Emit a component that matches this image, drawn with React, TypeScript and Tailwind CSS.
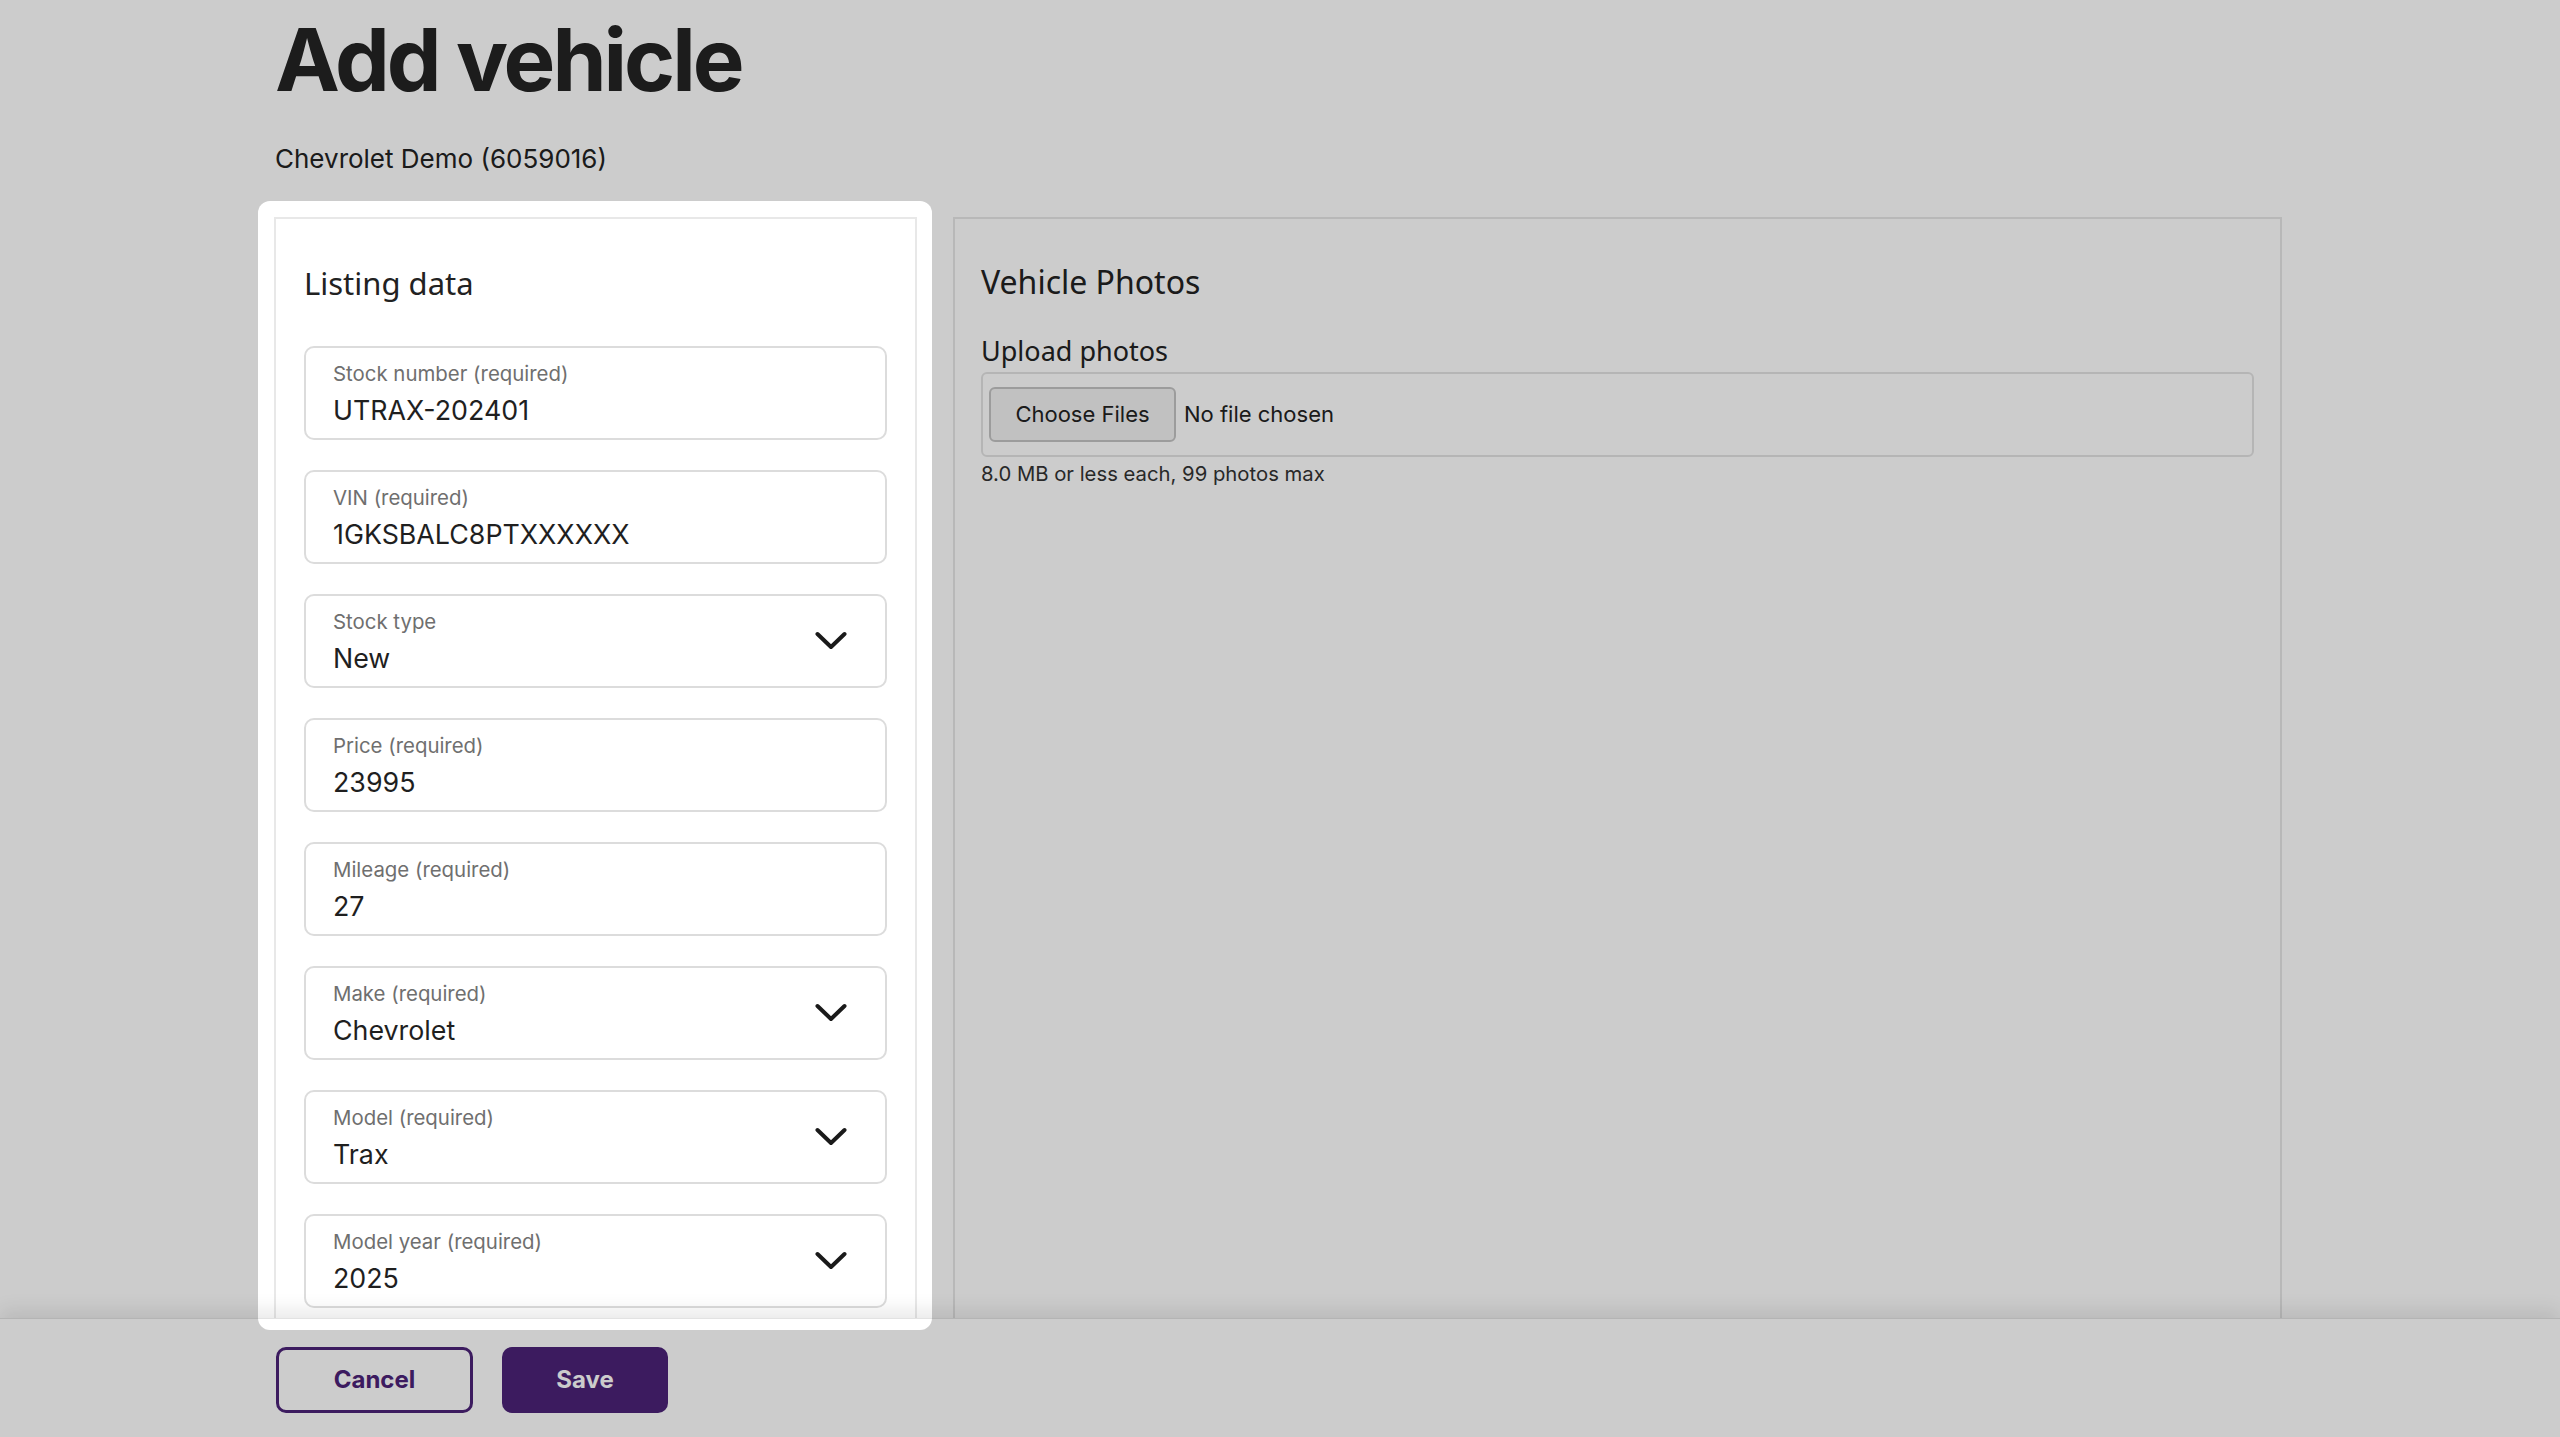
import React from "react";

function Chevron() {
  return (
    <svg width="32" height="20" viewBox="0 0 32 20" fill="none" className="shrink-0">
      <path d="M2.5 3 L16 16 L29.5 3" stroke="#1a1a1a" strokeWidth="4" strokeLinecap="round" strokeLinejoin="round" />
    </svg>
  );
}

function Field({ label, value, select }: { label: string; value: string; select?: boolean }) {
  return (
    <div className="h-[94px] rounded-[10px] border-2 border-[#dcdcdc] bg-white flex items-center pl-[27px] pr-[38px]">
      <div className="flex-1 flex flex-col self-start pt-[16px]">
        <div className="text-[20.4px] leading-none text-[#6f6f6f]">{label}</div>
        <div className="mt-[13px] text-[26.8px] leading-none text-[#1f1f1f]">{value}</div>
      </div>
      {select && <Chevron />}
    </div>
  );
}

export default function App() {
  const fields = [
    { label: "Stock number (required)", value: "UTRAX-202401" },
    { label: "VIN (required)", value: "1GKSBALC8PTXXXXXX" },
    { label: "Stock type", value: "New", select: true },
    { label: "Price (required)", value: "23995" },
    { label: "Mileage (required)", value: "27" },
    { label: "Make (required)", value: "Chevrolet", select: true },
    { label: "Model (required)", value: "Trax", select: true },
    { label: "Model year (required)", value: "2025", select: true },
  ];

  return (
    <div className="relative h-[1437px] w-full overflow-hidden bg-white font-['Inter',sans-serif] text-[#222]">
      <div className="ml-[274px] w-[2008px]">
        <h1 className="pt-[16px] text-[87px] font-bold leading-none tracking-[-0.035em] text-[#232323] pl-[1px]">
          Add vehicle
        </h1>
        <div className="mt-[43px] text-[26px] leading-none text-[#222] pl-[1px]">
          Chevrolet Demo (6059016)
        </div>

        <div className="mt-[45px] flex gap-[36px]">
          <div className="w-[643px] shrink-0 border-2 border-[#e8e8e8] bg-white px-[28px] pt-[49px] pb-[240px]">
            <h2 className="font-['Noto_Sans',sans-serif] text-[31px] leading-none text-[#222]">Listing data</h2>
            <div className="mt-[47px] flex flex-col gap-[30px]">
              {fields.map((f) => (
                <Field key={f.label} label={f.label} value={f.value} select={f.select} />
              ))}
            </div>
          </div>

          <div className="flex-1 border-2 border-[#e6e6e6] bg-white px-[26px] pt-[47px]">
            <h2 className="font-['Noto_Sans',sans-serif] text-[32px] leading-none text-[#222]">Vehicle Photos</h2>
            <div className="mt-[39px] font-['Noto_Sans',sans-serif] text-[27px] leading-none text-[#222]">Upload photos</div>
            <div className="mt-[8px] h-[85px] rounded-[6px] border-2 border-[#e3e3e3] flex items-center pl-[6px]">
              <div className="h-[55px] w-[187px] rounded-[6px] border-2 border-[#c4c4c4] bg-[#f2f2f2] flex items-center justify-center text-[22px] text-[#222]">
                Choose Files
              </div>
              <div className="ml-[8px] text-[22px] text-[#222]">No file chosen</div>
            </div>
            <div className="mt-[7px] text-[20.3px] leading-none text-[#333]">8.0 MB or less each, 99 photos max</div>
          </div>
        </div>
      </div>

      <div className="absolute bottom-0 left-0 right-0 z-10 h-[119px] border-t border-[#e2e2e2] bg-white shadow-[0_-8px_18px_rgba(0,0,0,0.09)] flex items-start gap-[29px] pl-[276px] pt-[28px]">
        <button className="h-[66px] w-[197px] rounded-[10px] border-[3px] border-[#4b2277] bg-white text-[24px] font-bold text-[#4b2277]">
          Cancel
        </button>
        <button className="h-[66px] w-[166px] rounded-[10px] bg-[#4b2277] text-[24px] font-bold text-white">
          Save
        </button>
      </div>

      <div className="pointer-events-none absolute left-[258px] top-[201px] z-20 h-[1129px] w-[674px] rounded-[12px] shadow-[0_0_0_4000px_rgba(0,0,0,0.2)]" />
    </div>
  );
}
